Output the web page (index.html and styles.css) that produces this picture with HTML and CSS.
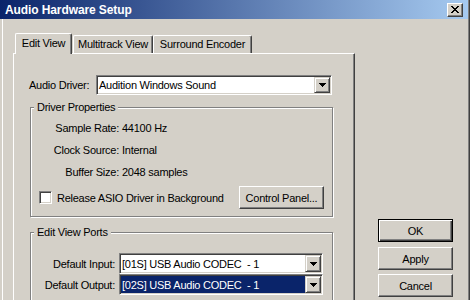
FILE: index.html
```html
<!DOCTYPE html>
<html>
<head>
<meta charset="utf-8">
<title>Audio Hardware Setup</title>
<link rel="stylesheet" href="styles.css">
</head>
<body>
<div class="window">
  <div class="titlebar">
    <span class="title">Audio Hardware Setup</span>
    <span class="close"><svg width="8" height="7" viewBox="0 0 8 7"><path fill="#000" d="M0 0h2v1H0z M6 0h2v1H6z M1 1h2v1H1z M5 1h2v1H5z M2 2h4v1H2z M3 3h2v1H3z M2 4h4v1H2z M1 5h2v1H1z M5 5h2v1H5z M0 6h2v1H0z M6 6h2v1H6z"/></svg></span>
  </div>
  <div class="client">
    <div class="main">
      <div class="tabs">
        <div class="tab active t1">Edit View</div>
        <div class="tab t2">Multitrack View</div>
        <div class="tab t3">Surround Encoder</div>
      </div>
      <div class="panel">
        <div class="drow">
          <span class="dlabel">Audio Driver:</span>
          <div class="combo c-driver">
            <span class="combo-text">Audition Windows Sound</span>
            <span class="combo-btn"><svg width="7" height="4" viewBox="0 0 7 4"><path fill="#000" d="M0 0h7v1H0z M1 1h5v1H1z M2 2h3v1H2z M3 3h1v1H3z"/></svg></span>
          </div>
        </div>
        <fieldset class="group props">
          <legend>Driver Properties</legend>
          <div class="prop"><span class="plabel">Sample Rate:</span><span class="pval">44100 Hz</span></div>
          <div class="prop"><span class="plabel">Clock Source:</span><span class="pval">Internal</span></div>
          <div class="prop"><span class="plabel">Buffer Size:</span><span class="pval">2048 samples</span></div>
          <div class="asio">
            <span class="check"></span>
            <span class="check-label">Release ASIO Driver in Background</span>
            <button class="btn cp">Control Panel...</button>
          </div>
        </fieldset>
        <fieldset class="group ports">
          <legend>Edit View Ports</legend>
          <div class="port">
            <span class="portlabel">Default Input:</span>
            <div class="combo c-port">
              <span class="combo-text">[01S] USB Audio CODEC  - 1</span>
              <span class="combo-btn"><svg width="7" height="4" viewBox="0 0 7 4"><path fill="#000" d="M0 0h7v1H0z M1 1h5v1H1z M2 2h3v1H2z M3 3h1v1H3z"/></svg></span>
            </div>
          </div>
          <div class="port">
            <span class="portlabel">Default Output:</span>
            <div class="combo c-port">
              <span class="combo-text sel">[02S] USB Audio CODEC  - 1</span>
              <span class="combo-btn"><svg width="7" height="4" viewBox="0 0 7 4"><path fill="#000" d="M0 0h7v1H0z M1 1h5v1H1z M2 2h3v1H2z M3 3h1v1H3z"/></svg></span>
            </div>
          </div>
        </fieldset>
      </div>
    </div>
    <div class="side">
      <button class="btn default b-ok">OK</button>
      <button class="btn b-apply">Apply</button>
      <button class="btn b-cancel">Cancel</button>
    </div>
  </div>
</div>
</body>
</html>
```
FILE: styles.css
```css
html, body {
  margin: 0;
  padding: 0;
}
body {
  background: #d4d0c8;
  font-family: "Liberation Sans", Arial, sans-serif;
  font-size: 11px;
  letter-spacing: -0.25px;
  color: #000;
}
.window {
  width: 470px;
  height: 300px;
  overflow: hidden;
  display: flex;
  flex-direction: column;
  box-shadow: inset 2px 0 #d4d0c8, inset 3px 0 #fff, inset -1px 0 #404040, inset -2px 0 #808080;
}
.titlebar {
  flex: none;
  height: 19px;
  margin-right: 2px;
  box-sizing: border-box;
  padding: 0 5px 0 5px;
  display: flex;
  align-items: center;
  background: linear-gradient(90deg, #0a246a 0%, #a6caf0 100%);
  color: #fff;
  font-weight: bold;
  font-size: 12px;
  letter-spacing: -0.1px;
}
.title {
  line-height: 14px;
}
.close {
  margin-left: auto;
  width: 16px;
  height: 14px;
  box-sizing: border-box;
  background: #d4d0c8;
  border-style: solid;
  border-width: 1px;
  border-color: #fff #404040 #404040 #fff;
  box-shadow: inset -1px -1px #808080;
  display: flex;
  align-items: center;
  justify-content: center;
}
.close svg {
  display: block;
  shape-rendering: crispEdges;
}
.client {
  flex: 1;
  min-height: 0;
  display: flex;
}
.main {
  margin-left: 13px;
  width: 342px;
  display: flex;
  flex-direction: column;
}
.tabs {
  display: flex;
  align-items: flex-end;
  height: 21px;
  margin-top: 14px;
  margin-bottom: -1px;
  padding-left: 2px;
  position: relative;
  z-index: 1;
}
.tab {
  box-sizing: border-box;
  height: 18px;
  margin-bottom: 1px;
  padding-top: 2px;
  line-height: 13px;
  text-align: center;
  background: #d4d0c8;
  border-top: 1px solid #fff;
  border-left: 1px solid #fff;
  border-right: 1px solid #404040;
  box-shadow: inset -1px 0 #808080;
  border-radius: 2px 2px 0 0;
  white-space: nowrap;
}
.tab.active {
  height: 21px;
  margin-bottom: 0;
  padding-top: 3px;
}
.t1 { width: 57px; }
.t2 { width: 80px; margin-left: 1px; }
.t3 { width: 99px; }
.panel {
  flex: 1;
  box-sizing: border-box;
  border-top: 1px solid #fff;
  border-left: 1px solid #fff;
  border-right: 1px solid #404040;
  box-shadow: inset -1px 0 #808080;
  padding-left: 15px;
}
.drow {
  display: flex;
  align-items: center;
  margin-top: 21px;
  height: 20px;
}
.dlabel {
  width: 67px;
  flex: none;
}
.combo {
  box-sizing: border-box;
  display: flex;
  background: #fff;
  border-style: solid;
  border-width: 1px;
  border-color: #808080 #fff #fff #808080;
  box-shadow: inset 1px 1px #404040, inset -1px -1px #d4d0c8;
  padding: 1px;
}
.c-driver {
  width: 236px;
  height: 20px;
}
.c-port {
  width: 204px;
  height: 21px;
}
.combo-text {
  flex: 1;
  min-width: 0;
  display: flex;
  align-items: center;
  padding-left: 1px;
  white-space: pre;
  overflow: hidden;
}
.combo-text.sel {
  background: #0a246a;
  color: #fff;
}
.combo-btn {
  flex: none;
  width: 16px;
  box-sizing: border-box;
  background: #d4d0c8;
  border-style: solid;
  border-width: 1px;
  border-color: #d4d0c8 #404040 #404040 #d4d0c8;
  box-shadow: inset 1px 1px #fff, inset -1px -1px #808080;
  display: flex;
  align-items: center;
  justify-content: center;
}
.combo-btn svg {
  display: block;
  shape-rendering: crispEdges;
}
.group {
  box-sizing: border-box;
  width: 303px;
  min-width: 0;
  margin: 0 0 0 1px;
  border: 1px solid #808080;
  box-shadow: inset 1px 1px #fff, 1px 1px #fff;
}
.group legend {
  margin-left: 3px;
  padding: 0 3px;
  line-height: 13px;
  background: #d4d0c8;
}
.props {
  margin-top: 6px;
  padding: 3px 0 7px 0;
}
.prop {
  display: flex;
  align-items: center;
  height: 22px;
}
.plabel {
  width: 88px;
  flex: none;
  text-align: right;
}
.pval {
  margin-left: 3px;
}
.asio {
  display: flex;
  align-items: center;
  height: 23px;
  margin-top: 3px;
  padding-left: 8px;
}
.check {
  flex: none;
  width: 13px;
  height: 13px;
  box-sizing: border-box;
  background: #fff;
  border-style: solid;
  border-width: 1px;
  border-color: #808080 #fff #fff #808080;
  box-shadow: inset 1px 1px #404040, inset -1px -1px #d4d0c8;
  margin-right: 5px;
}
.btn {
  font: inherit;
  letter-spacing: inherit;
  color: #000;
  background: #d4d0c8;
  box-sizing: border-box;
  border-style: solid;
  border-width: 1px;
  border-color: #fff #404040 #404040 #fff;
  box-shadow: inset -1px -1px #808080;
  padding: 0;
  margin: 0;
  height: 23px;
}
.btn.default {
  border-color: #000;
  box-shadow: inset 1px 1px #fff, inset -1px -1px #404040, inset -2px -2px #808080;
}
.cp {
  margin-left: auto;
  margin-right: 8px;
  width: 85px;
}
.ports {
  margin-top: 9px;
  padding: 14px 0 8px 0;
}
.port {
  display: flex;
  align-items: center;
  height: 21px;
}
.portlabel {
  width: 84px;
  flex: none;
  text-align: right;
  margin-right: 4px;
}
.side {
  margin-left: 23px;
  width: 75px;
  padding-top: 200px;
  display: flex;
  flex-direction: column;
}
.side .btn {
  width: 75px;
}
.b-apply { margin-top: 5px; }
.b-cancel { margin-top: 4px; }
```
